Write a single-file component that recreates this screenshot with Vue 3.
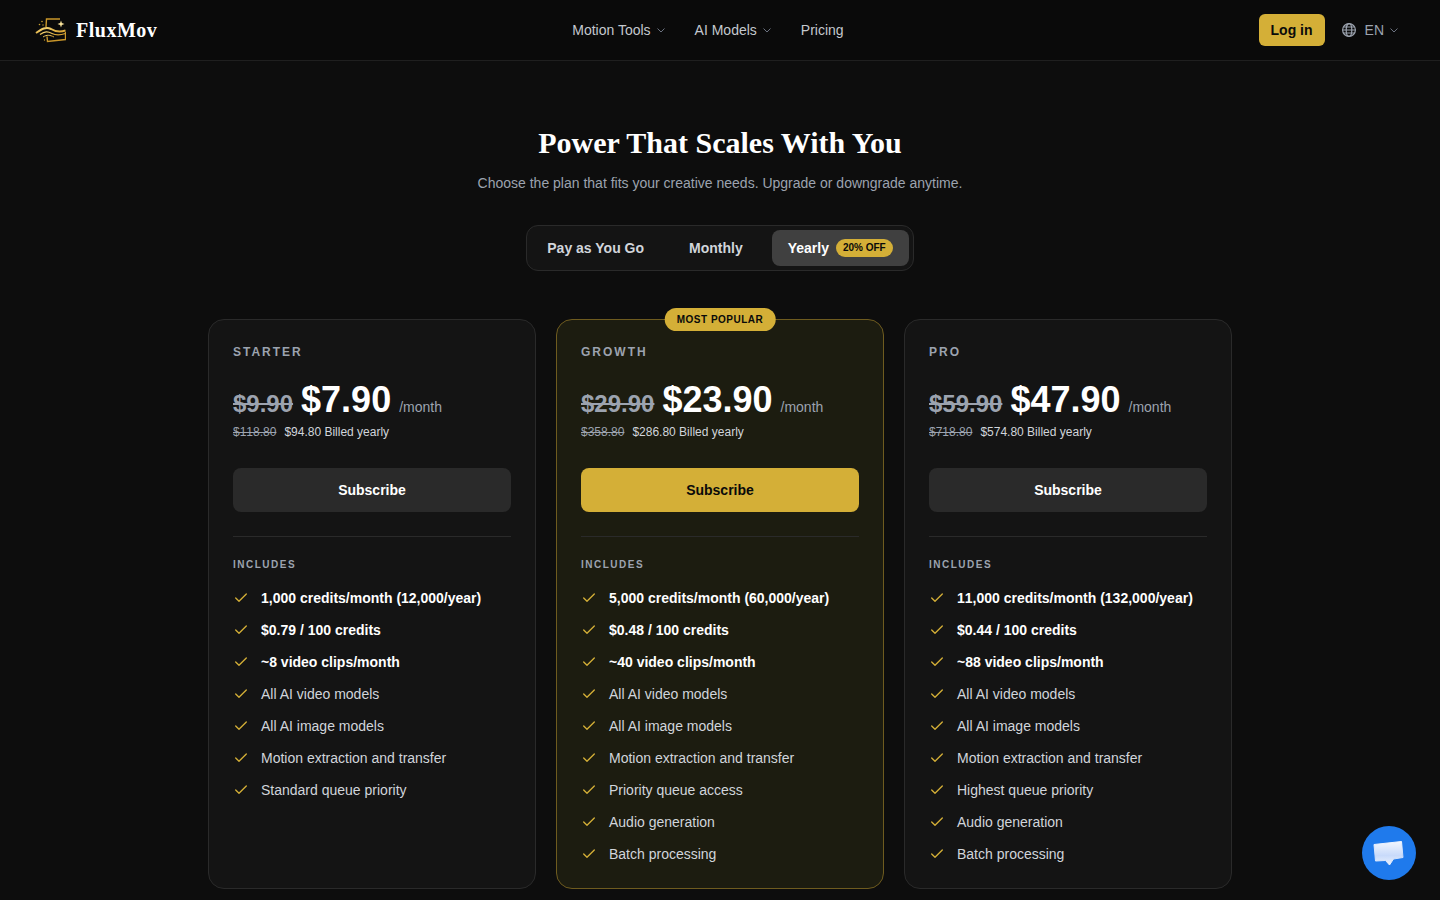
<template>
  <div class="page">
    <header class="topbar">
      <a class="brand">
        <svg class="logo" width="32" height="26" viewBox="0 0 32 26" fill="none">
          <defs>
            <linearGradient id="gold" x1="0" y1="0" x2="1" y2="1">
              <stop offset="0" stop-color="#f6d77a" />
              <stop offset="1" stop-color="#d29a26" />
            </linearGradient>
          </defs>
          <path d="M12 10 L12.5 2 L26 2" stroke="#c9962a" stroke-width="1.4" />
          <path d="M31.5 15 L31.5 22.5 L13.5 24.5 L13 19.5" stroke="#c9962a" stroke-width="1.4" />
          <path d="M2 16 C8 12 12 9.5 17 12 C21 14.5 26 15.5 31.5 13.5" stroke="url(#gold)" stroke-width="2" />
          <path d="M6 17.5 C11 14 14 14.5 18 16.5 C22 18.5 27 18 31.5 16.5" stroke="url(#gold)" stroke-width="1.3" />
          <path d="M9 20 C13 17.5 16 18 20 20" stroke="url(#gold)" stroke-width="1" />
          <path d="M27 3.5 L27.9 6.1 L30.5 7 L27.9 7.9 L27 10.5 L26.1 7.9 L23.5 7 L26.1 6.1 Z" fill="#f8e29a" />
          <circle cx="8" cy="4.5" r="0.8" fill="#c9a033" />
          <circle cx="5.5" cy="7.5" r="0.8" fill="#c9a033" />
          <circle cx="9" cy="8" r="0.7" fill="#c9a033" />
          <circle cx="10.5" cy="23" r="0.7" fill="#c9a033" />
        </svg>
        <span class="brand-name">FluxMov</span>
      </a>
      <nav class="nav">
        <a class="nav-link">Motion Tools
          <svg class="chev" width="11" height="10" viewBox="0 0 11 10"><path d="M1.5 3.5 L5 7 L8.5 3.5" /></svg>
        </a>
        <a class="nav-link">AI Models
          <svg class="chev" width="11" height="10" viewBox="0 0 11 10"><path d="M1.5 3.5 L5 7 L8.5 3.5" /></svg>
        </a>
        <a class="nav-link">Pricing</a>
      </nav>
      <div class="actions">
        <button class="login">Log in</button>
        <div class="lang">
          <svg class="globe" width="16" height="16" viewBox="0 0 16 16" fill="none" stroke="#9ca3af" stroke-width="1.2">
            <circle cx="8" cy="8" r="6.4" />
            <ellipse cx="8" cy="8" rx="2.8" ry="6.4" />
            <path d="M1.6 8 H14.4 M2.5 5 H13.5 M2.5 11 H13.5" />
          </svg>
          <span>EN</span>
          <svg class="chev" width="10" height="10" viewBox="0 0 10 10"><path d="M1.5 3.5 L5 7 L8.5 3.5" /></svg>
        </div>
      </div>
    </header>

    <main class="main">
      <h1 class="title">Power That Scales With You</h1>
      <p class="subtitle">Choose the plan that fits your creative needs. Upgrade or downgrade anytime.</p>

      <div class="tabs">
        <button class="tab">Pay as You Go</button>
        <button class="tab">Monthly</button>
        <button class="tab active">Yearly <span class="off">20% OFF</span></button>
      </div>

      <section class="plans">
        <article v-for="plan in plans" :key="plan.name" class="plan" :class="{ featured: plan.featured }">
          <span v-if="plan.featured" class="popular">MOST POPULAR</span>
          <div class="plan-name">{{ plan.name }}</div>
          <div class="price-row">
            <span class="old-price">{{ plan.oldPrice }}</span>
            <span class="price">{{ plan.price }}</span>
            <span class="per">/month</span>
          </div>
          <div class="billed">
            <s>{{ plan.oldYear }}</s>
            <span>{{ plan.year }} Billed yearly</span>
          </div>
          <button class="subscribe">Subscribe</button>
          <div class="divider"></div>
          <div class="includes">INCLUDES</div>
          <ul class="features">
            <li v-for="(f, i) in plan.features" :key="f" :class="{ strong: i < 3 }">
              <svg width="16" height="16" viewBox="0 0 16 16" fill="none" stroke="#d4af37" stroke-width="1.33" stroke-linecap="round" stroke-linejoin="round">
                <path d="M13.3 4 L6 11.3 L2.7 8" />
              </svg>
              <span>{{ f }}</span>
            </li>
          </ul>
        </article>
      </section>
    </main>

    <button class="chat">
      <svg width="32" height="26" viewBox="0 0 32 26">
        <defs>
          <linearGradient id="bubble" x1="0" y1="0" x2="0" y2="1">
            <stop offset="0" stop-color="#f2f6fe" />
            <stop offset="0.6" stop-color="#c8dafa" />
            <stop offset="1" stop-color="#eaf1fd" />
          </linearGradient>
        </defs>
        <path d="M1 4.5 L28.5 1.5 L30 17.5 L20.5 19 L16.5 25 L12.5 20.5 L2.5 21 Z" fill="url(#bubble)" stroke="url(#bubble)" stroke-width="1" stroke-linejoin="round" />
      </svg>
    </button>
  </div>
</template>

<script setup>
const plans = [
  {
    name: 'STARTER',
    oldPrice: '$9.90',
    price: '$7.90',
    oldYear: '$118.80',
    year: '$94.80',
    features: [
      '1,000 credits/month (12,000/year)',
      '$0.79 / 100 credits',
      '~8 video clips/month',
      'All AI video models',
      'All AI image models',
      'Motion extraction and transfer',
      'Standard queue priority',
    ],
  },
  {
    name: 'GROWTH',
    featured: true,
    oldPrice: '$29.90',
    price: '$23.90',
    oldYear: '$358.80',
    year: '$286.80',
    features: [
      '5,000 credits/month (60,000/year)',
      '$0.48 / 100 credits',
      '~40 video clips/month',
      'All AI video models',
      'All AI image models',
      'Motion extraction and transfer',
      'Priority queue access',
      'Audio generation',
      'Batch processing',
    ],
  },
  {
    name: 'PRO',
    oldPrice: '$59.90',
    price: '$47.90',
    oldYear: '$718.80',
    year: '$574.80',
    features: [
      '11,000 credits/month (132,000/year)',
      '$0.44 / 100 credits',
      '~88 video clips/month',
      'All AI video models',
      'All AI image models',
      'Motion extraction and transfer',
      'Highest queue priority',
      'Audio generation',
      'Batch processing',
    ],
  },
]
</script>

<style>
html, body {
  background: #0d0d0d;
}
</style>

<style scoped>
.page {
  min-height: 900px;
  background: #0d0d0d;
  color: #fff;
  font-family: "Liberation Sans", Arial, sans-serif;
}
.topbar {
  height: 60px;
  display: flex;
  justify-content: space-between;
  align-items: center;
  padding: 0 41px 0 34px;
  background: #0a0a0a;
  border-bottom: 1px solid #1f1f1f;
}
.brand {
  display: flex;
  align-items: center;
  gap: 10px;
}
.brand-name {
  font-family: "Liberation Serif", serif;
  font-weight: 700;
  font-size: 20px;
  letter-spacing: 0.5px;
}
.nav {
  display: flex;
  align-items: center;
  gap: 28px;
}
.nav-link {
  display: flex;
  align-items: center;
  gap: 5px;
  font-size: 14px;
  color: #c4c8ce;
}
.chev {
  fill: none;
  stroke: #6b7280;
  stroke-width: 1;
}
.actions {
  display: flex;
  align-items: center;
  justify-content: flex-end;
  gap: 16px;
}
.login {
  height: 32px;
  padding: 0 12px;
  border: none;
  border-radius: 6px;
  background: #d4af37;
  color: #0a0a0a;
  font: 700 14px "Liberation Sans", Arial, sans-serif;
}
.lang {
  display: flex;
  align-items: center;
  gap: 5px;
  font-size: 14px;
  color: #9ca3af;
}
.globe {
  margin-right: 3px;
}
.main {
  width: 1024px;
  margin: 0 auto;
  padding: 64px 0 40px;
}
.title {
  margin: 0;
  text-align: center;
  font-family: "Liberation Serif", serif;
  font-size: 30px;
  line-height: 36px;
  font-weight: 700;
}
.subtitle {
  margin: 12px 0 0;
  text-align: center;
  font-size: 14px;
  line-height: 20px;
  color: #9ca3af;
}
.tabs {
  width: max-content;
  margin: 32px auto 0;
  display: flex;
  align-items: center;
  gap: 13px;
  padding: 4px;
  background: #141414;
  border: 1px solid #2a2a2a;
  border-radius: 12px;
}
.tab {
  height: 36px;
  padding: 0 16px;
  display: flex;
  align-items: center;
  gap: 7px;
  border: none;
  border-radius: 8px;
  background: transparent;
  color: #d1d5db;
  font: 700 14px "Liberation Sans", Arial, sans-serif;
}
.tab.active {
  background: #404040;
  color: #fff;
}
.off {
  padding: 2px 7px;
  border-radius: 999px;
  background: #d4af37;
  color: #0a0a0a;
  font-size: 10px;
  line-height: 14px;
  font-weight: 700;
}
.plans {
  margin-top: 48px;
  display: grid;
  grid-template-columns: repeat(3, 328px);
  gap: 20px;
}
.plan {
  position: relative;
  height: 570px;
  box-sizing: border-box;
  padding: 24px;
  background: #141414;
  border: 1px solid #2a2a2a;
  border-radius: 16px;
}
.plan.featured {
  background: #1c1c10;
  border-color: #6e5b1f;
}
.popular {
  position: absolute;
  top: -12px;
  left: 50%;
  transform: translateX(-50%);
  padding: 4px 12px;
  border-radius: 999px;
  background: #d4af37;
  color: #0a0a0a;
  font-size: 10px;
  line-height: 15px;
  font-weight: 700;
  letter-spacing: 0.5px;
  white-space: nowrap;
}
.plan-name {
  font-size: 12px;
  line-height: 16px;
  font-weight: 700;
  letter-spacing: 2px;
  color: #9ca3af;
}
.price-row {
  margin-top: 19px;
  display: flex;
  align-items: baseline;
  gap: 8px;
  height: 37px;
}
.old-price {
  font-size: 24px;
  font-weight: 700;
  color: #9ca3af;
  text-decoration: line-through;
}
.price {
  font-size: 36px;
  font-weight: 700;
}
.per {
  font-size: 14px;
  color: #9ca3af;
}
.billed {
  margin-top: 8px;
  display: flex;
  gap: 8px;
  font-size: 12px;
  line-height: 16px;
  color: #d1d5db;
}
.billed s {
  color: #9ca3af;
  font-kerning: none;
}
.subscribe {
  display: block;
  width: 100%;
  height: 44px;
  margin-top: 28px;
  border: none;
  border-radius: 8px;
  background: #2a2a2a;
  color: #fff;
  font: 700 14px "Liberation Sans", Arial, sans-serif;
}
.featured .subscribe {
  background: #d4af37;
  color: #0a0a0a;
}
.divider {
  margin-top: 24px;
  height: 1px;
  background: #2a2a2a;
}
.includes {
  margin-top: 22px;
  font-size: 10px;
  line-height: 12px;
  font-weight: 700;
  letter-spacing: 1.5px;
  color: #9ca3af;
}
.features {
  list-style: none;
  margin: 17px 0 0;
  padding: 0;
  display: flex;
  flex-direction: column;
  gap: 12px;
}
.features li {
  display: flex;
  align-items: center;
  gap: 12px;
  font-size: 14px;
  line-height: 20px;
  color: #d1d5db;
}
.features li.strong {
  color: #fff;
  font-weight: 700;
  font-kerning: none;
}
.chat {
  position: fixed;
  right: 24px;
  bottom: 20px;
  width: 54px;
  height: 54px;
  padding: 0;
  display: flex;
  align-items: center;
  justify-content: center;
  border: none;
  border-radius: 50%;
  background: #1f7aec;
}
</style>
